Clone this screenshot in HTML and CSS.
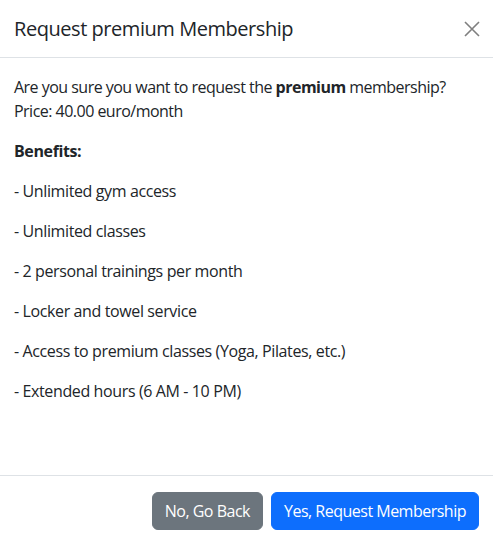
FILE: index.html
```html
<!DOCTYPE html>
<html lang="en">
<head>
<meta charset="utf-8">
<title>Request premium Membership</title>
<link rel="stylesheet" href="styles.css">
</head>
<body>
<div class="modal">
  <div class="modal-header">
    <h5 class="modal-title">Request premium Membership</h5>
    <button class="btn-close" type="button" aria-label="Close">
      <svg viewBox="0 0 16 16" width="16" height="16"><path d="M1 1L15 15M15 1L1 15" stroke="#7f7f7f" stroke-width="1.6" fill="none"/></svg>
    </button>
  </div>
  <div class="modal-body">
    <p class="intro">Are you sure you want to request the <strong>premium</strong> membership?<br>Price: 40.00 euro/month</p>
    <p><strong>Benefits:</strong></p>
    <p>- Unlimited gym access</p>
    <p>- Unlimited classes</p>
    <p>- 2 personal trainings per month</p>
    <p>- Locker and towel service</p>
    <p>- Access to premium classes (Yoga, Pilates, etc.)</p>
    <p>- Extended hours (6 AM - 10 PM)</p>
  </div>
  <div class="modal-footer">
    <button class="btn btn-secondary" type="button">No, Go Back</button>
    <button class="btn btn-primary" type="button">Yes, Request Membership</button>
  </div>
</div>
</body>
</html>
```
FILE: styles.css
```css
* { box-sizing: border-box; }
html, body { margin: 0; padding: 0; background: #fff; }
body {
  font-family: "Open Sans", "Noto Sans", sans-serif;
  font-size: 16px;
  line-height: 24px;
  color: #212529;
}
.modal { width: 493px; }
.modal-header {
  display: flex;
  align-items: center;
  justify-content: space-between;
  padding: 16px 16px 16px 14px;
  border-bottom: 1px solid #dee2e6;
  height: 58px;
}
.modal-title {
  margin: 0;
  font-size: 20px;
  font-weight: 500;
  line-height: 24px;
  letter-spacing: -0.45px;
  padding-top: 1px;
}
.btn-close {
  border: 0;
  background: transparent;
  padding: 0;
  margin-right: -3px;
  width: 16px;
  height: 16px;
  display: flex;
}
.modal-body {
  padding: 17px 14px 16px;
  height: 417px;
}
.modal-body p { margin: 0 0 16px; letter-spacing: -0.38px; }
.modal-body p.intro { letter-spacing: -0.52px; }
.modal-body strong { font-weight: 700; }
.modal-footer {
  display: flex;
  justify-content: flex-end;
  gap: 8px;
  padding: 16px 14px;
  border-top: 1px solid #dee2e6;
}
.btn {
  font-family: inherit;
  font-size: 16px;
  line-height: 24px;
  height: 38px;
  padding: 6px 12px;
  border: 1px solid transparent;
  border-radius: 6px;
  color: #fff;
  letter-spacing: -0.5px;
}
.btn-secondary { background: #6c757d; border-color: #6c757d; }
.btn-primary { background: #0d6efd; border-color: #0d6efd; }
```
